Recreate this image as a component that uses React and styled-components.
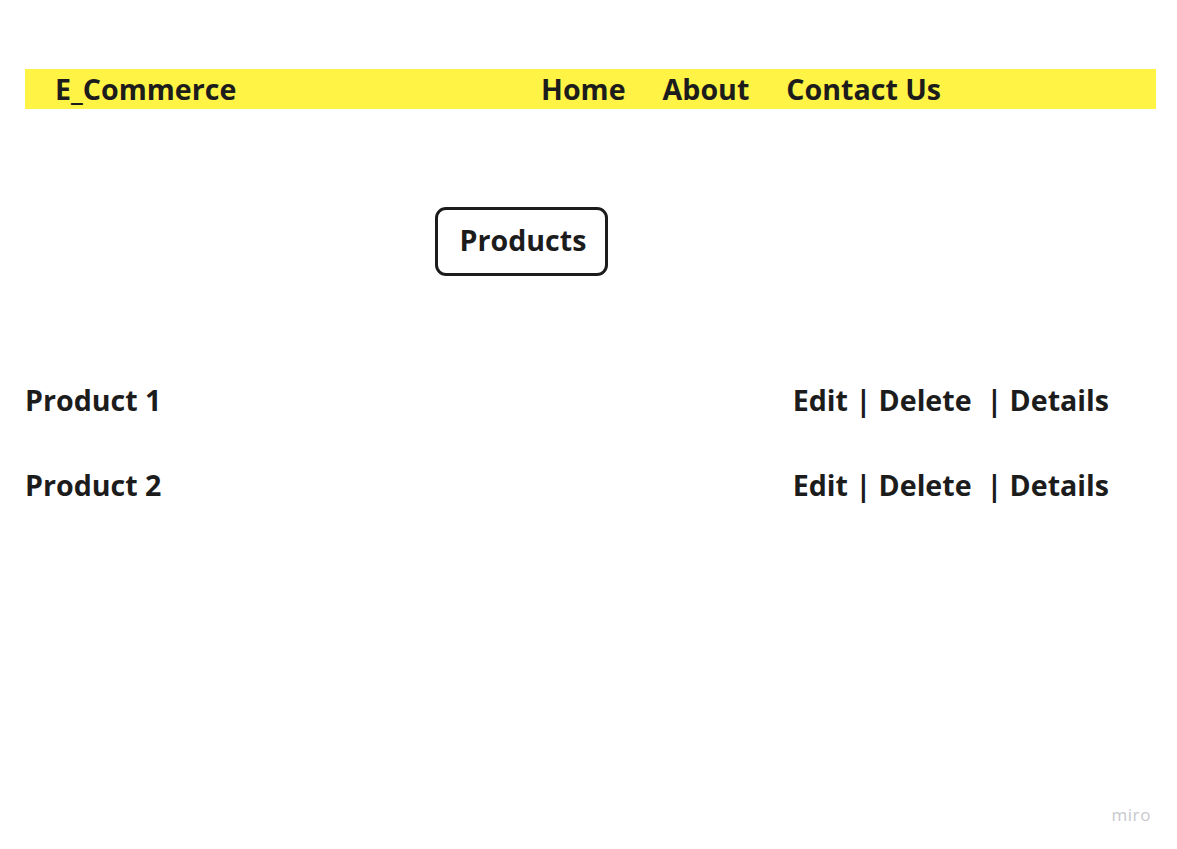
import styled, { createGlobalStyle } from 'styled-components';

const GlobalStyle = createGlobalStyle`
    html, body {
        margin: 0;
        padding: 0;
        background: #ffffff;
    }
    body {
        font-family: "Open Sans", "Noto Sans", sans-serif;
        color: #1c1c1c;
    }
`;

// Page frame
const Page = styled.div`
    position: relative;
    width: 1177px;
    height: 849px;
    box-sizing: border-box;
    padding: 69px 21px 0 25px;
`;

const Header = styled.header`
    height: 40px;
    background: #fff345;
    display: flex;
    align-items: center;
    padding-left: 30px;
`;

const Logo = styled.div`
    flex: 0 0 486px;
    font-size: 28.6px;
    font-weight: 700;
    line-height: 40px;
`;

const NavLinks = styled.nav`
    display: flex;
    gap: 37px;
`;

const NavLink = styled.a`
    font-size: 28.6px;
    font-weight: 700;
    line-height: 40px;
    color: inherit;
    text-decoration: none;
`;

const ProductsButton = styled.button`
    display: block;
    margin: 98px 0 0 410px;
    width: 173px;
    height: 69px;
    box-sizing: border-box;
    border: 3px solid #1c1c1c;
    border-radius: 11px;
    background: #fff;
    font-family: inherit;
    font-size: 28.6px;
    font-weight: 700;
    color: inherit;
    padding: 0 0 4px 3px;
`;

const ProductList = styled.div`
    margin-top: 104px;
    display: flex;
    flex-direction: column;
    gap: 45px;
`;

const ProductRow = styled.div`
    display: flex;
    justify-content: space-between;
    align-items: center;
    padding-right: 47px;
    font-size: 28.6px;
    font-weight: 700;
    line-height: 40px;
`;

const ProductName = styled.div``;

const Actions = styled.div`
    white-space: pre;
`;

const Watermark = styled.div`
    position: absolute;
    right: 26px;
    bottom: 23px;
    font-size: 17px;
    letter-spacing: 0.6px;
    color: #c8c8cc;
`;

const products = ['Product 1', 'Product 2'];

export default function App() {
    return (
        <>
            <GlobalStyle />
            <Page>
                <Header>
                    <Logo>E_Commerce</Logo>
                    <NavLinks>
                        <NavLink href="#">Home</NavLink>
                        <NavLink href="#">About</NavLink>
                        <NavLink href="#">Contact Us</NavLink>
                    </NavLinks>
                </Header>

                <ProductsButton>Products</ProductsButton>

                <ProductList>
                    {products.map(name => (
                        <ProductRow key={name}>
                            <ProductName>{name}</ProductName>
                            <Actions>{'Edit | Delete  | Details'}</Actions>
                        </ProductRow>
                    ))}
                </ProductList>

                <Watermark>miro</Watermark>
            </Page>
        </>
    );
}
